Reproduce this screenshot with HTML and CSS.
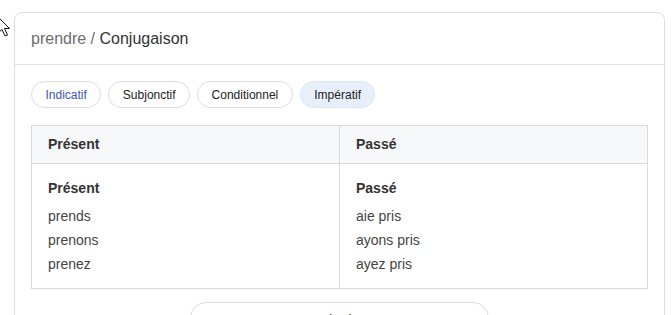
FILE: index.html
```html
<!DOCTYPE html>
<html lang="fr">
<head>
    <meta charset="UTF-8">
    <meta name="viewport" content="width=device-width, initial-scale=1.0">
    <title>prendre - Conjugaison</title>
    <link rel="stylesheet" href="styles.css">
</head>
<body>
    <!-- mouse pointer left over the page -->
    <svg class="cursor" width="14" height="22" viewBox="0 0 14 22">
        <path d="M1 1 L1 17 L5 13.5 L8 20 L10.5 19 L7.5 12.5 L12.5 12.5 Z" fill="#fff" stroke="#111" stroke-width="1"/>
    </svg>

    <div class="card">
        <div class="card-header">
            <span class="crumb">prendre /</span> Conjugaison
        </div>

        <div class="card-body">
            <!-- Mood tabs -->
            <div class="pills">
                <button class="pill pill-link">Indicatif</button>
                <button class="pill">Subjonctif</button>
                <button class="pill">Conditionnel</button>
                <button class="pill active">Impératif</button>
            </div>

            <table class="conj-table">
                <thead>
                    <tr>
                        <th>Présent</th>
                        <th>Passé</th>
                    </tr>
                </thead>
                <tbody>
                    <tr>
                        <td>
                            <div class="tense">Présent</div>
                            <div class="form">prends</div>
                            <div class="form">prenons</div>
                            <div class="form">prenez</div>
                        </td>
                        <td>
                            <div class="tense">Passé</div>
                            <div class="form">aie pris</div>
                            <div class="form">ayons pris</div>
                            <div class="form">ayez pris</div>
                        </td>
                    </tr>
                </tbody>
            </table>

            <div class="more">
                <button class="more-btn">Voir plus</button>
            </div>
        </div>
    </div>
</body>
</html>
```

FILE: styles.css
```css
body {
    font-family: Arial, "Liberation Sans", sans-serif;
    background: #fff;
    margin: 0;
    padding: 12px 6px 0 14px;
    color: #333;
    overflow: hidden;
    height: 315px;
    box-sizing: border-box;
}
.cursor {
    position: absolute;
    left: -3px;
    top: 16px;
}
.card {
    border: 1px solid #dedede;
    border-radius: 8px;
    background: #fff;
    height: 400px;
}
.card-header {
    height: 51px;
    line-height: 51px;
    padding: 0 16px;
    font-size: 16px;
    color: #333;
    border-bottom: 1px solid #e2e2e2;
}
.crumb {
    color: #6e6e6e;
}
.card-body {
    padding: 16px;
}
.pills {
    display: flex;
    gap: 7px;
    margin-bottom: 17px;
}
.pill {
    font-family: Arial, "Liberation Sans", sans-serif;
    font-size: 12px;
    height: 27px;
    padding: 0 13.5px;
    border: 1px solid #dcdcdc;
    border-radius: 14px;
    background: #fff;
    color: #222;
    cursor: pointer;
}
.pill-link {
    color: #3a55b8;
}
.pill.active {
    background: #e7effb;
    border-color: #dbe5f4;
    color: #222;
}
.conj-table {
    width: 100%;
    border-collapse: collapse;
    border: 1px solid #dadada;
    font-size: 14px;
}
.conj-table th,
.conj-table td {
    width: 50%;
    text-align: left;
    vertical-align: top;
    border: 1px solid #dadada;
    padding: 0 16px;
}
.conj-table th {
    background: #f7f8fa;
    font-weight: bold;
    line-height: 21px;
    padding-top: 8px;
    padding-bottom: 8px;
    color: #333;
}
.conj-table td {
    padding-top: 14px;
    padding-bottom: 12px;
}
.tense {
    font-weight: bold;
    line-height: 20px;
    margin-bottom: 6px;
    color: #333;
}
.form {
    line-height: 24px;
    color: #444;
}
.more {
    display: flex;
    justify-content: center;
    margin-top: 13px;
}
.more-btn {
    width: 299px;
    height: 36px;
    border: 1px solid #dcdcdc;
    border-radius: 16px;
    background: #fff;
    font-family: Arial, "Liberation Sans", sans-serif;
    font-size: 14px;
    color: #333;
}
```
